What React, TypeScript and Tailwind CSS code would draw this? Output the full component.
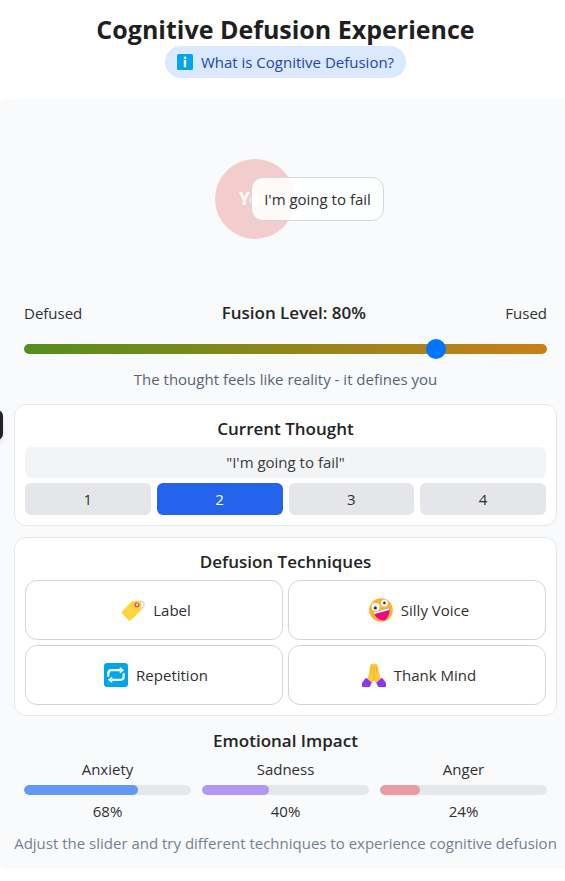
import { useState } from 'react';

const thoughts = ["I'm not good enough", "I'm going to fail", 'Nobody likes me', "I can't handle this"];

const techniques = [
  { name: 'Label', icon: <LabelIcon /> },
  { name: 'Silly Voice', icon: <SillyIcon /> },
  { name: 'Repetition', icon: <RepeatIcon /> },
  { name: 'Thank Mind', icon: <ThanksIcon /> },
];

function InfoIcon() {
  return (
    <svg viewBox="0 0 16 16" className="size-4" aria-hidden="true">
      <rect width="16" height="16" rx="1.5" fill="#00a6ed" />
      <circle cx="8" cy="3.9" r="1.3" fill="#fff" />
      <rect x="6.8" y="6" width="2.4" height="7.2" rx="0.6" fill="#fff" />
    </svg>
  );
}

function LabelIcon() {
  return (
    <svg viewBox="0 0 24 24" className="size-6" aria-hidden="true">
      <circle cx="19.8" cy="6.8" r="3.4" fill="none" stroke="#d3d3d3" strokeWidth="1.1" />
      <path d="M11.4 3.2 18 2.4q1.800-.1 2 1.600l.5 6.800q0 .8-.5 1.400L9.600 22.400q-.9.8-1.800 0L.9 15.200q-.8-.9 0-1.800L10.400 3.800q.4-.4 1-.6Z" fill="#fcd53f" />
      <circle cx="16" cy="6.800" r="1.900" fill="#f4f4f4" stroke="#f8412f" strokeWidth="1.300" />
      <path d="M16 6.800q.8-2.500 3.200-3.300" fill="none" stroke="#d3d3d3" strokeWidth="1" />
    </svg>
  );
}

function SillyIcon() {
  return (
    <svg viewBox="0 0 24 24" className="size-6" aria-hidden="true">
      <circle cx="12" cy="12" r="11.800" fill="#ffb02e" />
      <circle cx="6.600" cy="8.900" r="4.100" fill="#fff" />
      <circle cx="15.300" cy="5.200" r="3.500" fill="#fff" />
      <circle cx="6.300" cy="9.900" r="1.600" fill="#402a32" />
      <circle cx="15.400" cy="4.900" r="1.300" fill="#402a32" />
      <path d="M4.800 14.200 20.300 9.900c.8 4.500-.8 9.500-4.500 12.300-4.700 1-9.500-2.600-11-8Z" fill="#bb1d80" />
      <path d="M4.800 14.200 20.300 9.900v2L5.500 15.900Z" fill="#fff" />
      <path d="M7.200 17.600c3.200-2.600 8.800-4.300 11.800-2.600-.4 3.200-1.700 5.900-3.600 7.200-3.600.5-6.600-1.600-8.200-4.600Z" fill="#ff0084" />
    </svg>
  );
}

function RepeatIcon() {
  return (
    <svg viewBox="0 0 24 24" className="size-6" aria-hidden="true">
      <rect width="24" height="24" rx="3" fill="#00a6ed" />
      <path d="M4.300 13v-2.500q0-3.300 3.300-3.300h9M19.700 11v2.500q0 3.300-3.300 3.300h-9" fill="none" stroke="#fff" strokeWidth="2.200" strokeLinecap="round" />
      <path d="M16 4.400 19.800 7.200 16 10ZM8 14 4.200 16.800 8 19.600Z" fill="#fff" stroke="#fff" strokeWidth=".6" strokeLinejoin="round" />
    </svg>
  );
}

function ThanksIcon() {
  return (
    <svg viewBox="0 0 24 24" className="size-6" aria-hidden="true">
      <path d="M8.200 2.400Q8.600.4 10.400.8L12 1.400 13.400.6q1.800-.6 2.200 1.400L17.500 12q.4 2.500 1.700 4l-4.600 4.500q-1.600-1.300-2.600-3.300-1 2-2.600 3.300L5 16q1.200-1.500 1.600-4Z" fill="#ffc83d" />
      <path d="M12 3v14M9.700 3.500 9.200 10.500M14.300 3.500 14.800 10.500" fill="none" stroke="#e8a827" strokeWidth=".7" strokeLinecap="round" />
      <path d="M4.700 15.200 9.300 19.300q.5.600.1 1.200L8 23.500q-.3.500-1 .5H.8Q0 24 0 23.200V20.500q0-.5.300-.9l3-4.200q.7-.8 1.400-.2ZM19.300 15.200 14.700 19.300q-.5.600-.1 1.200L16 23.500q.3.500 1 .5h6.200q.8 0 .8-.8V20.500q0-.5-.3-.9l-3-4.200q-.7-.8-1.400-.2Z" fill="#8a38f5" />
    </svg>
  );
}

export default function App() {
  const [fusion, setFusion] = useState(80);
  const [current, setCurrent] = useState(1);

  const emotions = [
    { name: 'Anxiety', value: Math.round(fusion * 0.85), color: 'bg-[#6399f3]' },
    { name: 'Sadness', value: Math.round(fusion * 0.5), color: 'bg-[#b197f0]' },
    { name: 'Anger', value: Math.round(fusion * 0.3), color: 'bg-[#e99b9d]' },
  ];

  return (
    <div className="relative min-h-screen overflow-hidden bg-white font-['Open_Sans',sans-serif] text-[15px] leading-5 text-[#303030]">
      <header className="flex flex-col items-center pt-3 pr-2 pb-[21px] pl-3.5">
        <h1 className="text-[25px] leading-[34px] font-bold text-[#1f1f1f]">Cognitive Defusion Experience</h1>
        <button className="flex h-8 items-center gap-2 rounded-full bg-[#dbe9fe] px-3 text-[#2544b5]">
          <InfoIcon />
          What is Cognitive Defusion?
        </button>
      </header>

      <main className="rounded-l-lg bg-[#f9fafc] pr-2 pb-4 pl-3.5">
        <div className="flex h-[199px] items-center justify-center">
          <div className="flex items-center pl-7">
            <div className="flex size-20 items-center justify-center rounded-full bg-[#f3cccd] text-[17px] font-bold text-white">You</div>
            <div className="relative -ml-11 rounded-xl border border-[#d3d7de] bg-white/90 px-3 py-[11px]">{thoughts[current]}</div>
          </div>
        </div>

        <section className="px-2.5">
          <div className="flex h-[30px] items-center justify-between">
            <span>Defused</span>
            <label htmlFor="fusion" className="text-[17px] font-semibold text-[#242424]">Fusion Level: {fusion}%</label>
            <span>Fused</span>
          </div>
          <input
            id="fusion"
            type="range"
            min={0}
            max={100}
            value={fusion}
            onChange={(e) => setFusion(Number(e.target.value))}
            className="mt-4 block h-2.5 w-full appearance-none rounded-full bg-linear-to-r/srgb from-[#548e1d] to-[#ca7e1a] [&::-webkit-slider-thumb]:size-5 [&::-webkit-slider-thumb]:appearance-none [&::-webkit-slider-thumb]:rounded-full [&::-webkit-slider-thumb]:bg-[#0075ff]"
          />
          <p className="mt-[15px] text-center text-[#5a6272]">The thought feels like reality - it defines you</p>
        </section>

        <section className="mt-[15px] rounded-xl border border-[#e5e7eb] bg-white p-2.5">
          <h2 className="text-center text-[17px] leading-7 font-semibold text-[#242424]">Current Thought</h2>
          <p className="mt-1 rounded-md bg-[#f3f4f6] py-[5px] text-center leading-[21px] text-[#3a3a3a]">"{thoughts[current]}"</p>
          <div className="mt-[5px] grid grid-cols-4 gap-1.5">
            {thoughts.map((t, i) => (
              <button
                key={t}
                onClick={() => setCurrent(i)}
                className={`h-8 rounded-md ${i === current ? 'bg-[#2463eb] text-white' : 'bg-[#e5e6ea]'}`}
              >
                {i + 1}
              </button>
            ))}
          </div>
        </section>

        <section className="mt-[11px] rounded-xl border border-[#e5e7eb] bg-white p-2.5">
          <h2 className="text-center text-[17px] leading-7 font-semibold text-[#242424]">Defusion Techniques</h2>
          <div className="mt-1 grid grid-cols-2 gap-[5px]">
            {techniques.map((t) => (
              <button key={t.name} className="flex h-15 items-center justify-center gap-2 rounded-xl border border-[#d1d5db] bg-white pl-1">
                {t.icon}
                {t.name}
              </button>
            ))}
          </div>
        </section>

        <section className="mt-[11px] px-2.5">
          <h2 className="text-center text-[17px] leading-7 font-semibold text-[#242424]">Emotional Impact</h2>
          <div className="mt-1 grid grid-cols-3 gap-[11px] text-center">
            {emotions.map((e) => (
              <div key={e.name}>
                <p>{e.name}</p>
                <div className="my-[6px] h-2.5 overflow-hidden rounded-full bg-[#e5e7eb]">
                  <div className={`h-full rounded-full ${e.color}`} style={{ width: `${e.value}%` }} />
                </div>
                <p>{e.value}%</p>
              </div>
            ))}
          </div>
        </section>

        <p className="mt-3 text-center whitespace-nowrap text-[#777f8e]">
          Adjust the slider and try different techniques to experience cognitive defusion
        </p>
      </main>

      <button aria-label="Open menu" className="absolute top-[410px] -left-7 h-[30px] w-[31px] rounded-md bg-[#222] shadow-md" />
    </div>
  );
}
